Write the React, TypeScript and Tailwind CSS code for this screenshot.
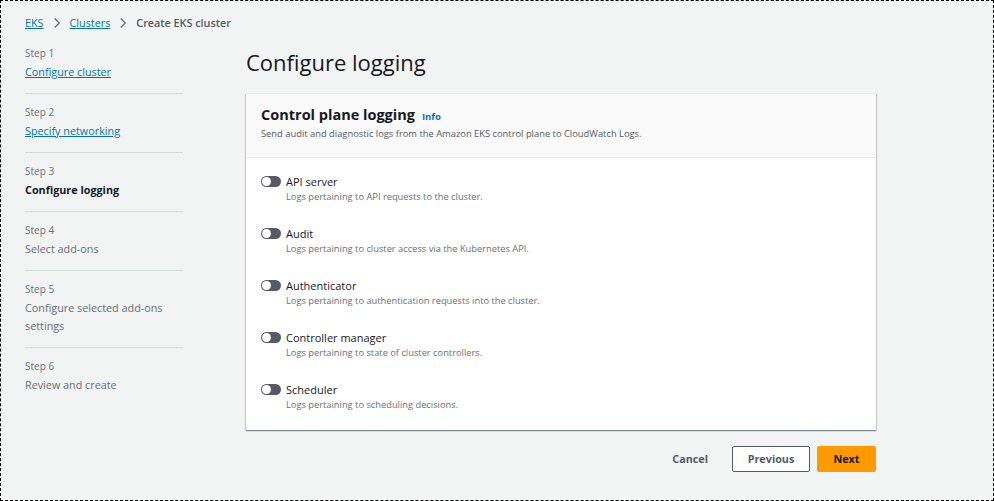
import React from "react";

const font = { fontFamily: '"Open Sans", "Noto Sans", sans-serif' };

const steps = [
  { n: 1, label: "Configure cluster", kind: "link" },
  { n: 2, label: "Specify networking", kind: "link" },
  { n: 3, label: "Configure logging", kind: "current" },
  { n: 4, label: "Select add-ons", kind: "disabled" },
  { n: 5, label: "Configure selected add-ons settings", kind: "disabled" },
  { n: 6, label: "Review and create", kind: "disabled" },
];

const logs = [
  { t: "API server", d: "Logs pertaining to API requests to the cluster." },
  { t: "Audit", d: "Logs pertaining to cluster access via the Kubernetes API." },
  { t: "Authenticator", d: "Logs pertaining to authentication requests into the cluster." },
  { t: "Controller manager", d: "Logs pertaining to state of cluster controllers." },
  { t: "Scheduler", d: "Logs pertaining to scheduling decisions." },
];

function Chevron() {
  return (
    <svg width="12" height="12" viewBox="0 0 16 16" className="mx-[7px]">
      <path d="M5 2l6 6-6 6" fill="none" stroke="#687078" strokeWidth="1.8" />
    </svg>
  );
}

function Toggle() {
  return (
    <div className="w-[20px] h-[11px] rounded-full bg-[#545b64] flex items-center pl-[1px] shrink-0 mt-[2px]">
      <div className="w-[9px] h-[9px] rounded-full bg-white" />
    </div>
  );
}

export default function App() {
  return (
    <div
      style={font}
      className="w-[994px] h-[501px] border border-dashed border-black bg-[#f2f3f3] text-[#16191f] overflow-hidden"
    >
      <div className="pl-[24px] pt-[13px] flex items-center text-[10.8px] leading-[18px]">
        <span className="text-[#0073bb] underline">EKS</span>
        <Chevron />
        <span className="text-[#0073bb] underline">Clusters</span>
        <Chevron />
        <span className="text-[#545b64] font-semibold">Create EKS cluster</span>
      </div>
      <div className="flex pl-[24px] pt-[13px]">
        <nav className="w-[158px] shrink-0">
          {steps.map((s, i) => (
            <div
              key={s.n}
              className={`${i < steps.length - 1 ? "border-b border-[#d5dbdb] pb-[12px]" : ""} ${i > 0 ? "pt-[10px]" : ""}`}
            >
              <div className="text-[10px] leading-[16px] text-[#687078]">Step {s.n}</div>
              <div
                className={`mt-[2px] text-[10.8px] leading-[18px] ${
                  s.kind === "link"
                    ? "text-[#0073bb] underline"
                    : s.kind === "current"
                    ? "font-bold text-[#16191f]"
                    : "text-[#687078]"
                }`}
              >
                {s.label}
              </div>
            </div>
          ))}
        </nav>
        <main className="ml-[63px] w-[630px] shrink-0">
          <h1 className="text-[22px] leading-[32px] font-normal pt-[1px]">Configure logging</h1>
          <div className="mt-[15px] bg-white border-t border-[#eaeded] shadow-[0_1px_1px_0_rgba(0,28,36,0.3),1px_1px_1px_0_rgba(0,28,36,0.15),-1px_1px_1px_0_rgba(0,28,36,0.15)]">
            <div className="bg-[#fafafa] border-b border-[#eaeded] px-[15px] pt-[11px] pb-[16px]">
              <div className="flex items-baseline leading-[20px]">
                <span className="text-[14.5px] font-bold">Control plane logging</span>
                <span className="ml-[7px] text-[9.5px] font-bold text-[#0073bb]">Info</span>
              </div>
              <div className="text-[9.35px] leading-[14px] text-[#545b64]">
                Send audit and diagnostic logs from the Amazon EKS control plane to CloudWatch Logs.
              </div>
            </div>
            <div className="px-[15px] pt-[16px] pb-[18px] flex flex-col gap-[22px]">
              {logs.map((l) => (
                <div key={l.t} className="flex gap-[5px]">
                  <Toggle />
                  <div>
                    <div className="text-[11px] leading-[16px]">{l.t}</div>
                    <div className="text-[9.3px] leading-[14px] text-[#687078]">{l.d}</div>
                  </div>
                </div>
              ))}
            </div>
          </div>
          <div className="flex justify-end items-center mt-[16px] gap-[7px]">
            <button className="h-[26px] px-[17px] text-[10.8px] font-bold text-[#545b64]">Cancel</button>
            <button className="h-[26px] w-[78px] border border-[#545b64] rounded-[2px] bg-white text-[10.8px] font-bold text-[#545b64]">
              Previous
            </button>
            <button className="h-[26px] w-[59px] rounded-[2px] bg-[#ff9900] text-[10.8px] font-bold text-[#16191f]">
              Next
            </button>
          </div>
        </main>
      </div>
    </div>
  );
}
